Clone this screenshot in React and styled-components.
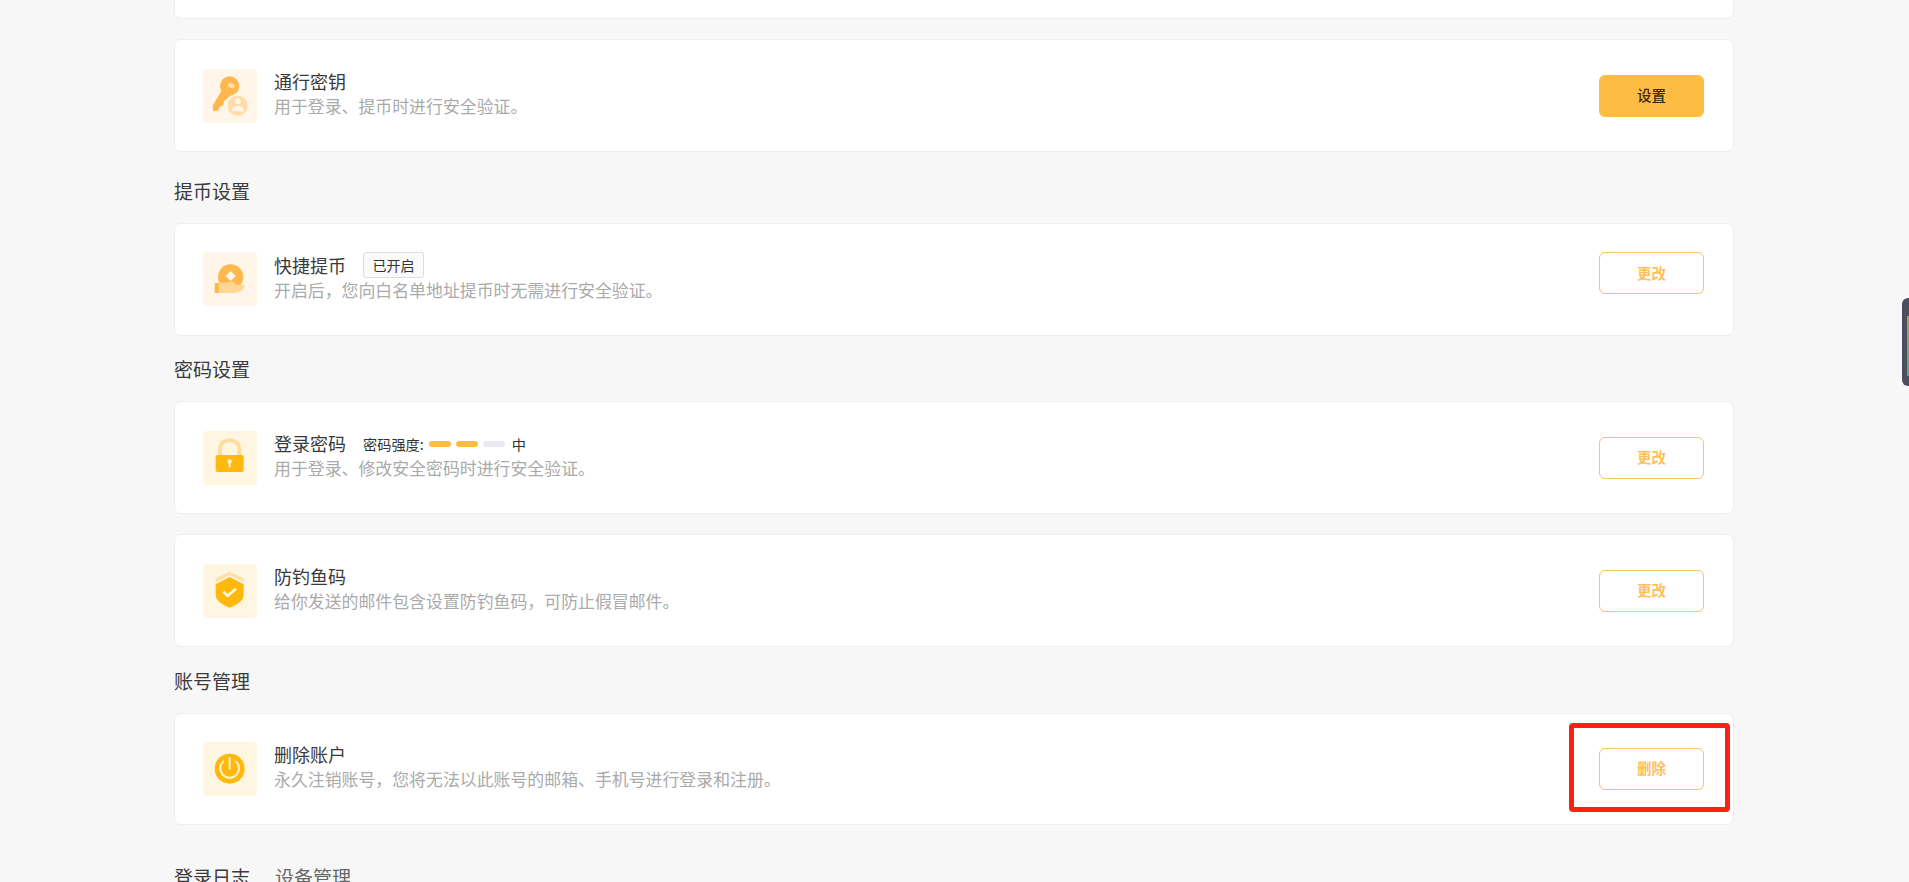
import React from 'react';
import styled, { createGlobalStyle } from 'styled-components';

const GlobalStyle = createGlobalStyle`
  html, body {
    margin: 0;
    padding: 0;
    height: 882px;
    overflow: hidden;
    background: #f7f7f7;
  }

  body {
    font-family: "Noto Sans CJK SC", "Liberation Sans", sans-serif;
    color: #333;
  }
`;

const Page = styled.div`
  height: 882px;
  padding-left: 174px;
  overflow: hidden;
  position: relative;
`;

const Main = styled.main`
  width: 1560px;
`;

const Group = styled.div`
  display: flex;
  flex-direction: column;
  gap: 20px;
`;

const Heading = styled.h3`
  margin: ${props => props.$top}px 0 18px;
  font-size: 19px;
  line-height: 28px;
  font-weight: 400;
  color: #3a3a3a;
`;

const Tabs = styled.div`
  display: flex;
  gap: 25px;
  margin-top: 37.5px;
`;

const Tab = styled.span`
  font-size: 19px;
  line-height: 28px;
  color: ${props => (props.$active ? '#3a3a3a' : '#666')};
`;

const CardStub = styled.div`
  height: 19.3px;
  box-sizing: border-box;
  background: #fff;
  border: 1px solid #eeeeee;
  border-top: 0;
  border-radius: 0 0 7px 7px;
`;

const Card = styled.section`
  display: flex;
  align-items: center;
  padding: 28.4px 29px 28.4px 28px;
  background: #fff;
  border: 1px solid #eeeeee;
  border-radius: 7px;
`;

const IconBox = styled.div`
  width: 54px;
  height: 54px;
  flex: none;
  border-radius: 4px;
  background: ${props => props.$bg};

  svg {
    display: block;
    width: 54px;
    height: 54px;
  }
`;

const Info = styled.div`
  flex: 1;
  min-width: 0;
  margin-left: 17px;
  padding-bottom: 4px;
`;

const TitleRow = styled.div`
  display: flex;
  align-items: center;
  gap: 17px;
  min-height: 25px;
`;

const Title = styled.div`
  font-size: 18px;
  line-height: 25px;
  color: #3a3a3a;
`;

const Desc = styled.div`
  font-size: 16.9px;
  line-height: 24px;
  color: #aaaaaa;
`;

const Badge = styled.span`
  display: inline-flex;
  align-items: center;
  justify-content: center;
  box-sizing: border-box;
  width: 61px;
  height: 26px;
  font-size: 14px;
  color: #333;
  background: #fafafa;
  border: 1px solid #dddddd;
  border-radius: 3px;
`;

const Strength = styled.div`
  display: flex;
  align-items: center;
  font-size: 14.2px;
  line-height: 20px;
  color: #333;
`;

const StrengthBars = styled.div`
  display: flex;
  gap: 5px;
  margin: 0 7px 0 5px;
`;

const StrengthBar = styled.span`
  width: 22px;
  height: 6px;
  border-radius: 3px;
  background: ${props => (props.$on ? '#ffbc42' : '#e9eaef')};
`;

const ButtonSlot = styled.div`
  position: relative;
  flex: none;
  align-self: ${props => (props.$raised ? 'flex-start' : 'center')};
`;

const ActionButton = styled.button`
  display: block;
  box-sizing: border-box;
  width: 105px;
  height: 42px;
  padding: 0 0 2px;
  font-family: inherit;
  font-size: 14.5px;
  font-weight: ${props => (props.$primary ? 500 : 700)};
  border-radius: 6px;
  cursor: pointer;
  color: ${props => (props.$primary ? '#3a2a10' : '#ffbf5c')};
  background: ${props => (props.$primary ? '#ffbc42' : '#fff')};
  border: 1px solid ${props => (props.$primary ? '#ffbc42' : '#f5c56a')};
`;

/* red marker drawn over the screenshot */
const Marker = styled.span`
  position: absolute;
  top: -25px;
  right: -26px;
  bottom: -22px;
  left: -30px;
  border: 5px solid #ff2014;
  border-radius: 4px;
  pointer-events: none;
`;

const SideHandle = styled.div`
  position: absolute;
  top: 298px;
  right: 0;
  width: 7px;
  height: 88px;
  background: #4c505e;
  border-radius: 6px 0 0 6px;

  &::after {
    content: '';
    position: absolute;
    top: 18px;
    right: 0;
    bottom: 10px;
    width: 2px;
    background: linear-gradient(#a89f6a, #5f9f98);
  }
`;

const KeyIcon = () => (
  <svg viewBox="25 25 162 162">
    <path d="M84 84 L54 135 L56 152 L70 150 L76 138 L86 134 L88 122 L116 98 Z" fill="#ffb84d" />
    <circle cx="105" cy="76" r="29" fill="#ffb84d" />
    <ellipse cx="110" cy="75" rx="10" ry="7" transform="rotate(25 110 75)" fill="#ffe3b3" />
    <circle cx="129" cy="135" r="35" fill="#fff6e9" />
    <circle cx="129" cy="135" r="30" fill="#ffdca8" />
    <circle cx="129" cy="122" r="9" fill="#fff6e9" />
    <path d="M111 152 Q111 136 129 136 Q147 136 147 152 Z" fill="#fff6e9" />
  </svg>
);

const CoinIcon = () => (
  <svg viewBox="25 25 162 162">
    <circle cx="108" cy="100" r="38" fill="#ffb84d" />
    <path d="M108 82 L123 97 L108 112 L93 97 Z" fill="#fff6e9" />
    <path d="M76 119 L110 114 Q121 114 121 123 L146 124 Q152 125 149 131 Q140 146 120 148 L76 148 Z" fill="#ffd795" />
    <rect x="60" y="118" width="14" height="30" rx="2" fill="#ffb84d" />
  </svg>
);

const LockIcon = () => (
  <svg viewBox="25 25 162 162">
    <path d="M76 100 V78 C76 44 134 44 134 78 V100" fill="none" stroke="#ffdb9c" strokeWidth="11" />
    <rect x="63" y="97" width="84" height="51" rx="6" fill="#ffb80d" />
    <circle cx="105" cy="116" r="6.5" fill="#fff6e1" />
    <rect x="102" y="116" width="6" height="18" rx="2" fill="#fff6e1" />
  </svg>
);

const ShieldIcon = () => (
  <svg viewBox="25 25 162 162">
    <path d="M63 68 L105 48 L147 68 V80 L105 58 L63 80 Z" fill="#ffdfa6" />
    <path d="M63 86 L105 64 L147 86 V118 Q147 140 105 156 Q63 140 63 118 Z" fill="#ffb80d" />
    <path d="M86 108 L99 120 L124 99" fill="none" stroke="#fff6e1" strokeWidth="8" />
  </svg>
);

const PowerIcon = () => (
  <svg viewBox="25 25 162 162">
    <circle cx="105" cy="105" r="45" fill="#ffb80d" />
    <path d="M88 82 A28 28 0 1 0 122 82" fill="none" stroke="#fff0cc" strokeWidth="6" />
    <path d="M105 72 V105" fill="none" stroke="#fff0cc" strokeWidth="6" strokeLinecap="round" />
  </svg>
);

function SettingCard({ icon, bg, title, extra, desc, action, primary, raised, marked }) {
  return (
    <Card>
      <IconBox $bg={bg}>{icon}</IconBox>
      <Info>
        <TitleRow>
          <Title>{title}</Title>
          {extra}
        </TitleRow>
        <Desc>{desc}</Desc>
      </Info>
      <ButtonSlot $raised={raised}>
        <ActionButton $primary={primary}>{action}</ActionButton>
        {marked && <Marker />}
      </ButtonSlot>
    </Card>
  );
}

export default function App() {
  return (
    <>
      <GlobalStyle />
      <Page>
        <Main>
          <Group>
            <CardStub />
            <SettingCard
              icon={<KeyIcon />}
              bg="#fff6e9"
              title="通行密钥"
              desc="用于登录、提币时进行安全验证。"
              action="设置"
              primary
            />
          </Group>

          <Heading $top={24.8}>提币设置</Heading>
          <Group>
            <SettingCard
              icon={<CoinIcon />}
              bg="#fff6e9"
              title="快捷提币"
              extra={<Badge>已开启</Badge>}
              desc="开启后，您向白名单地址提币时无需进行安全验证。"
              action="更改"
              raised
            />
          </Group>

          <Heading $top={19.7}>密码设置</Heading>
          <Group>
            <SettingCard
              icon={<LockIcon />}
              bg="#fff6e1"
              title="登录密码"
              extra={
                <Strength>
                  密码强度:
                  <StrengthBars>
                    <StrengthBar $on />
                    <StrengthBar $on />
                    <StrengthBar />
                  </StrengthBars>
                  中
                </Strength>
              }
              desc="用于登录、修改安全密码时进行安全验证。"
              action="更改"
            />
            <SettingCard
              icon={<ShieldIcon />}
              bg="#fff6e1"
              title="防钓鱼码"
              desc="给你发送的邮件包含设置防钓鱼码，可防止假冒邮件。"
              action="更改"
            />
          </Group>

          <Heading $top={19.6}>账号管理</Heading>
          <Group>
            <SettingCard
              icon={<PowerIcon />}
              bg="#fff6e1"
              title="删除账户"
              desc="永久注销账号，您将无法以此账号的邮箱、手机号进行登录和注册。"
              action="删除"
              marked
            />
          </Group>

          <Tabs>
            <Tab $active>登录日志</Tab>
            <Tab>设备管理</Tab>
          </Tabs>
        </Main>
        <SideHandle />
      </Page>
    </>
  );
}
